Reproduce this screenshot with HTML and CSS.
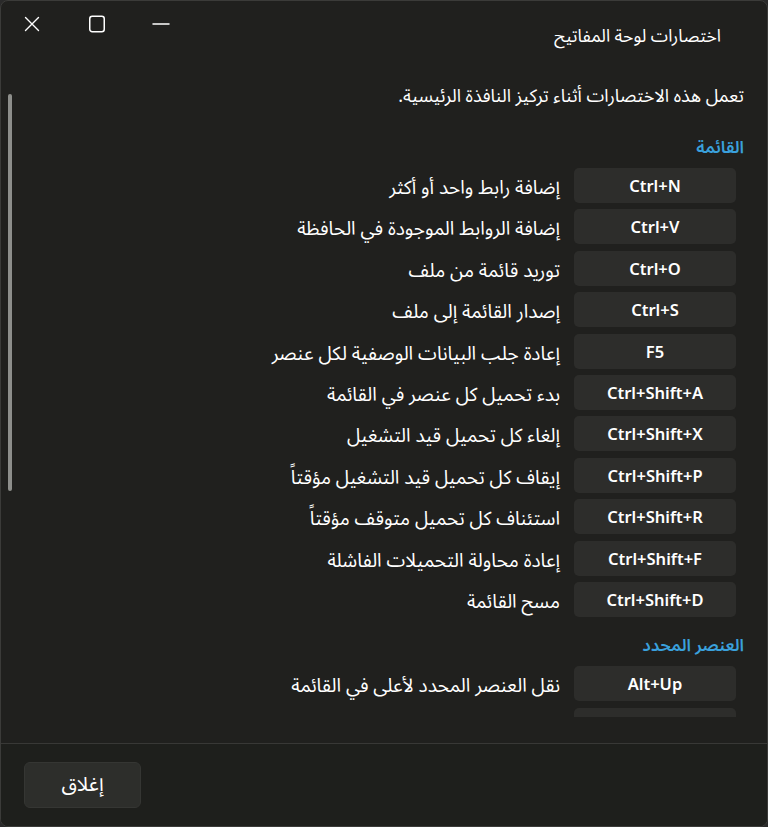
FILE: index.html
```html
<!DOCTYPE html>
<html lang="ar">
<head>
<meta charset="utf-8">
<title>اختصارات لوحة المفاتيح</title>
<link rel="stylesheet" href="styles.css">
</head>
<body>
<div class="window">
  <header class="titlebar">
    <div class="controls">
      <span class="ctl">
        <svg width="16" height="16" viewBox="0 0 16 16"><path d="M1.5 1.5 L14.5 14.5 M14.5 1.5 L1.5 14.5" stroke="#fff" stroke-width="1.4" fill="none" stroke-linecap="round"/></svg>
      </span>
      <span class="ctl">
        <svg width="18" height="18" viewBox="0 0 18 18"><rect x="1.75" y="1.25" width="14.5" height="15.5" rx="2.5" stroke="#fff" stroke-width="1.5" fill="none"/></svg>
      </span>
      <span class="ctl">
        <svg width="18" height="18" viewBox="0 0 18 18"><path d="M1 9 H17" stroke="#fff" stroke-width="1.5" fill="none" stroke-linecap="round"/></svg>
      </span>
    </div>
    <div class="title">اختصارات لوحة المفاتيح</div>
  </header>

  <main class="scroller">
    <div class="scroll-thumb"></div>
    <div class="content">
      <p class="desc">تعمل هذه الاختصارات أثناء تركيز النافذة الرئيسية.</p>

      <h2 class="section">القائمة</h2>
      <ul class="rows">
        <li class="row"><span class="key">Ctrl+N</span><span class="label">إضافة رابط واحد أو أكثر</span></li>
        <li class="row"><span class="key">Ctrl+V</span><span class="label">إضافة الروابط الموجودة في الحافظة</span></li>
        <li class="row"><span class="key">Ctrl+O</span><span class="label">توريد قائمة من ملف</span></li>
        <li class="row"><span class="key">Ctrl+S</span><span class="label">إصدار القائمة إلى ملف</span></li>
        <li class="row"><span class="key">F5</span><span class="label">إعادة جلب البيانات الوصفية لكل عنصر</span></li>
        <li class="row"><span class="key">Ctrl+Shift+A</span><span class="label">بدء تحميل كل عنصر في القائمة</span></li>
        <li class="row"><span class="key">Ctrl+Shift+X</span><span class="label">إلغاء كل تحميل قيد التشغيل</span></li>
        <li class="row"><span class="key">Ctrl+Shift+P</span><span class="label">إيقاف كل تحميل قيد التشغيل مؤقتاً</span></li>
        <li class="row"><span class="key">Ctrl+Shift+R</span><span class="label">استئناف كل تحميل متوقف مؤقتاً</span></li>
        <li class="row"><span class="key">Ctrl+Shift+F</span><span class="label">إعادة محاولة التحميلات الفاشلة</span></li>
        <li class="row"><span class="key">Ctrl+Shift+D</span><span class="label">مسح القائمة</span></li>
      </ul>

      <h2 class="section">العنصر المحدد</h2>
      <ul class="rows">
        <li class="row"><span class="key">Alt+Up</span><span class="label">نقل العنصر المحدد لأعلى في القائمة</span></li>
        <li class="row"><span class="key">Alt+Down</span><span class="label">نقل العنصر المحدد لأسفل في القائمة</span></li>
      </ul>
    </div>
  </main>

  <footer class="footer">
    <button class="btn">إغلاق</button>
  </footer>
</div>
</body>
</html>
```

FILE: styles.css
```css
* { box-sizing: border-box; }

html, body {
  margin: 0;
  padding: 0;
  background: #2a2a2a;
}

body {
  font-family: "Noto Sans Arabic", "Noto Sans", "DejaVu Sans", sans-serif;
  color: #ffffff;
}

.window {
  width: 768px;
  height: 827px;
  background: #20201e;
  border: 1px solid #3b3b39;
  border-radius: 8px;
  overflow: hidden;
  display: flex;
  flex-direction: column;
}

.titlebar {
  height: 71px;
  display: flex;
  align-items: flex-start;
  direction: ltr;
  flex: none;
}

.controls {
  display: flex;
  padding-left: 13px;
  padding-top: 6px;
  gap: 28.5px;
}

.ctl {
  width: 36px;
  height: 34px;
  display: flex;
  align-items: center;
  justify-content: center;
}

.title {
  margin-left: auto;
  margin-right: 46px;
  margin-top: 24px;
  font-size: 17.5px;
  line-height: 24px;
  direction: rtl;
}

.scroller {
  position: relative;
  height: 645px;
  flex: none;
  overflow: hidden;
}

.scroll-thumb {
  position: absolute;
  left: 7px;
  top: 22px;
  width: 4px;
  height: 397px;
  border-radius: 2px;
  background: #8d8e8b;
}

.content {
  direction: rtl;
  padding: 12px 23px 0 24px;
}

.desc {
  margin: 0;
  font-size: 18px;
  line-height: 24px;
}

.section {
  margin: 28px 0 0;
  font-size: 17px;
  font-weight: 600;
  line-height: 24px;
  color: #3aa0dc;
}

.rows {
  list-style: none;
  margin: 8px 0 0;
  padding: 0 8px 0 0;
  display: flex;
  flex-direction: column;
  gap: 6.4px;
}

.rows + .section {
  margin-top: 17.5px;
}

.row {
  display: flex;
  align-items: center;
  height: 35px;
}

.key {
  flex: none;
  width: 162px;
  height: 35px;
  display: flex;
  align-items: center;
  justify-content: center;
  background: #2d2d2b;
  border-radius: 5px;
  font-family: "Noto Sans", "Open Sans", sans-serif;
  font-weight: 600;
  font-size: 16.5px;
  direction: ltr;
}

.label {
  margin-right: 14px;
  padding-top: 5px;
  font-size: 19px;
  white-space: nowrap;
}

.footer {
  flex: 1;
  margin-top: 26px;
  border-top: 1px solid #383836;
  background: #1e1f1c;
  padding: 18px 0 0 23px;
}

.btn {
  width: 117px;
  height: 46px;
  background: #2d2e2b;
  border: 1px solid #353633;
  border-radius: 6px;
  color: #fff;
  font-family: "Noto Sans Arabic", "DejaVu Sans", sans-serif;
  font-size: 20px;
  cursor: pointer;
}
```
